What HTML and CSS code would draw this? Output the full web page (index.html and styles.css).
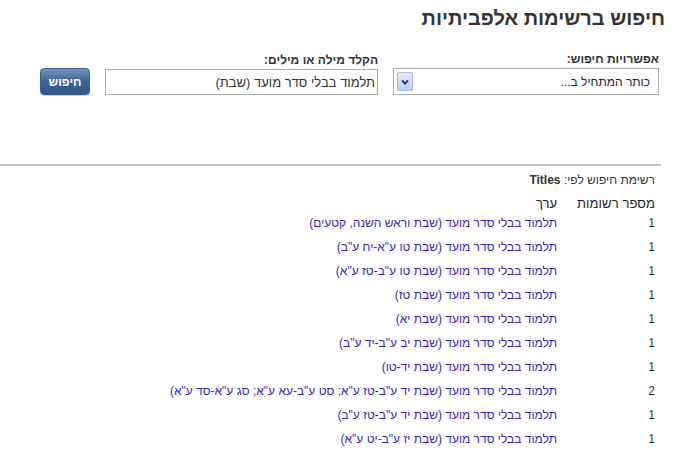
FILE: index.html
```html
<!DOCTYPE html>
<html lang="he" dir="rtl">
<head>
<meta charset="utf-8">
<title>חיפוש ברשימות אלפביתיות</title>
<link rel="stylesheet" href="styles.css">
</head>
<body>
<h1 class="title">חיפוש ברשימות אלפביתיות</h1>
<form class="search">
  <div class="field field-select">
    <label class="label">אפשרויות חיפוש:</label>
    <div class="select">
      <span class="select-text">כותר המתחיל ב...</span>
      <span class="select-arrow">
        <svg width="10" height="8" viewBox="0 0 10 8"><path d="M2 2.5 L5 5.5 L8 2.5" fill="none" stroke="#2c3f6b" stroke-width="2"/></svg>
      </span>
    </div>
  </div>
  <div class="field field-input">
    <label class="label">הקלד מילה או מילים:</label>
    <div class="input">תלמוד בבלי סדר מועד (שבת)</div>
  </div>
  <div class="field field-btn">
    <button type="button" class="btn">חיפוש</button>
  </div>
</form>
<hr class="divider">
<div class="results">
  <div class="browse-by">רשימת חיפוש לפי: <b>Titles</b></div>
  <table class="list">
    <thead>
      <tr><th class="c-count">מספר רשומות</th><th class="c-val">ערך</th></tr>
    </thead>
    <tbody>
      <tr><td class="c-count">1</td><td class="c-val"><a href="#">תלמוד בבלי סדר מועד (שבת וראש השנה, קטעים)</a></td></tr>
      <tr><td class="c-count">1</td><td class="c-val"><a href="#">תלמוד בבלי סדר מועד (שבת טו ע"א-יח ע"ב)</a></td></tr>
      <tr><td class="c-count">1</td><td class="c-val"><a href="#">תלמוד בבלי סדר מועד (שבת טו ע"ב-טז ע"א)</a></td></tr>
      <tr><td class="c-count">1</td><td class="c-val"><a href="#">תלמוד בבלי סדר מועד (שבת טז)</a></td></tr>
      <tr><td class="c-count">1</td><td class="c-val"><a href="#">תלמוד בבלי סדר מועד (שבת יא)</a></td></tr>
      <tr><td class="c-count">1</td><td class="c-val"><a href="#">תלמוד בבלי סדר מועד (שבת יב ע"ב-יד ע"ב)</a></td></tr>
      <tr><td class="c-count">1</td><td class="c-val"><a href="#">תלמוד בבלי סדר מועד (שבת יד-טו)</a></td></tr>
      <tr><td class="c-count">2</td><td class="c-val"><a href="#">תלמוד בבלי סדר מועד (שבת יד ע"ב-טז ע"א; סט ע"ב-עא ע"א; סג ע"א-סד ע"א)</a></td></tr>
      <tr><td class="c-count">1</td><td class="c-val"><a href="#">תלמוד בבלי סדר מועד (שבת יד ע"ב-טז ע"ב)</a></td></tr>
      <tr><td class="c-count">1</td><td class="c-val"><a href="#">תלמוד בבלי סדר מועד (שבת יז ע"ב-יט ע"א)</a></td></tr>
    </tbody>
  </table>
</div>
</body>
</html>
```
FILE: styles.css
```css
html, body {
  margin: 0;
  padding: 0;
  background: #fff;
}
body {
  direction: rtl;
  font-family: "Liberation Sans", Arial, sans-serif;
  font-size: 12px;
  color: #333;
}
.title {
  margin: 0;
  padding: 7px 10px 0 0;
  font-size: 20px;
  line-height: 22px;
  font-weight: bold;
  color: #333;
}
.search {
  display: flex;
  align-items: flex-end;
  gap: 15px;
  margin: 23px 16px 0 0;
}
.field {
  display: flex;
  flex-direction: column;
}
.label {
  font-weight: bold;
  font-size: 12px;
  line-height: 14px;
  color: #333;
  margin-bottom: 2px;
}
.select {
  box-sizing: border-box;
  width: 266px;
  height: 27px;
  border: 1px solid #aaa;
  display: flex;
  align-items: center;
  justify-content: space-between;
  padding: 0 8px 0 3px;
  font-size: 12px;
  color: #222;
}
.select-arrow {
  width: 16px;
  height: 19px;
  box-sizing: border-box;
  border: 1px solid #a9bde3;
  border-radius: 2px;
  background: linear-gradient(#e3ebfb, #bccdf0);
  display: flex;
  align-items: center;
  justify-content: center;
}
.input {
  box-sizing: border-box;
  width: 273px;
  height: 26px;
  border: 1px solid #aaa;
  padding: 0 2px;
  display: flex;
  align-items: center;
  font-size: 13px;
  color: #333;
}
.btn {
  box-sizing: border-box;
  width: 50px;
  height: 27px;
  border: 1px solid #3b5f8f;
  border-radius: 4px;
  background: linear-gradient(#7592bd, #3c6597 50%, #2f5686);
  color: #fff;
  font-family: "Liberation Sans", Arial, sans-serif;
  font-weight: bold;
  font-size: 12px;
  padding: 0;
  box-shadow: 0 1px 1px rgba(0,0,0,0.2);
}
.divider {
  border: 0;
  height: 2px;
  background: #c4c4cf;
  margin: 69px 14px 0 0;
}
.results {
  padding: 7px 20px 0 0;
}
.browse-by {
  line-height: 14px;
  color: #333;
}
.browse-by b {
  font-weight: bold;
}
.list {
  border-collapse: collapse;
  margin-top: 9px;
}
.list th {
  font-weight: normal;
  color: #222;
  font-size: 13px;
  line-height: 15px;
  padding: 0;
  text-align: right;
  white-space: nowrap;
}
.list th.c-count {
  letter-spacing: 0.1px;
}
.list td {
  height: 24px;
  padding: 0;
  vertical-align: middle;
  font-size: 12px;
}
.list .c-count {
  width: 75px;
  padding-left: 20px;
}
.list td.c-count {
  text-align: right;
  color: #333;
}
.list a {
  color: #3a1cc6;
  text-decoration: none;
}
```
